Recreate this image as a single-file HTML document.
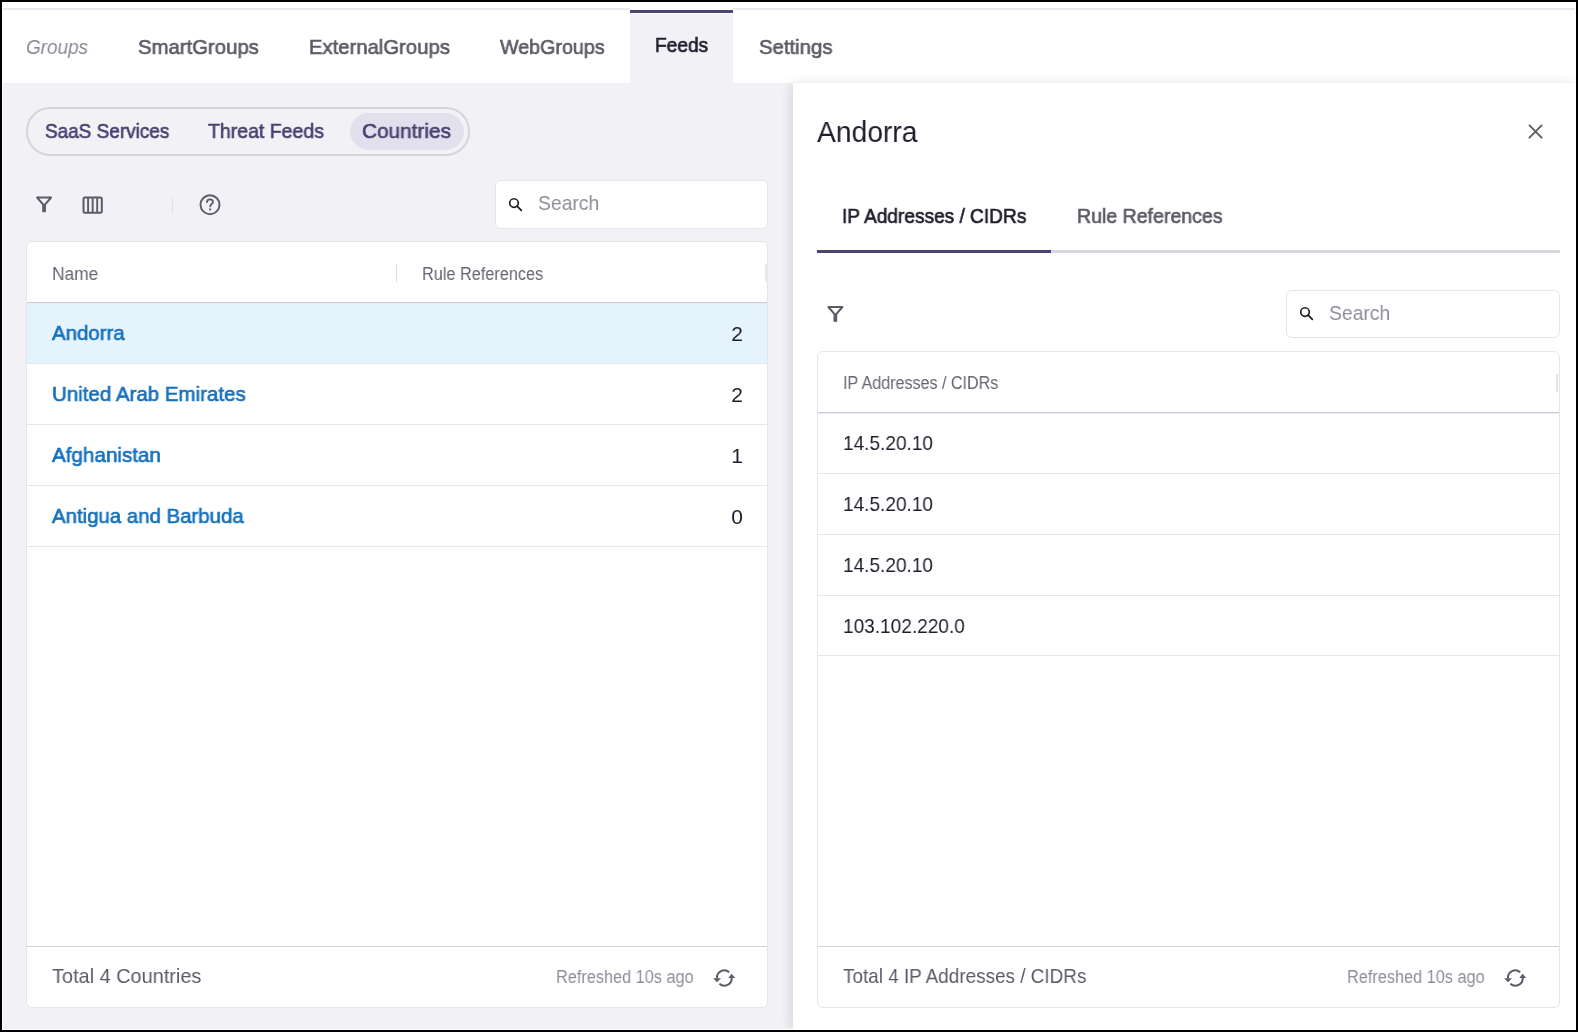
<!DOCTYPE html>
<html>
<head>
<meta charset="utf-8">
<style>
*{box-sizing:border-box;margin:0;padding:0}
html,body{width:1578px;height:1032px;overflow:hidden}
body{font-family:"Liberation Sans",sans-serif;position:relative;background:#f2f1f6}
.a{position:absolute}
.t{position:absolute;white-space:nowrap;line-height:21px;font-size:21px;will-change:transform;transform-origin:0 0}
.sb{-webkit-text-stroke:0.65px currentColor}
#frame{position:absolute;left:0;top:0;width:1578px;height:1032px;border:2px solid #000;z-index:50;pointer-events:none}
#wl{position:absolute;left:2px;top:2px;width:1px;height:1028px;background:#fff;z-index:49}
#wb{position:absolute;left:2px;top:1029px;width:1574px;height:1px;background:#fff;z-index:49}
#hdr{left:2px;top:2px;width:1574px;height:81px;background:#fff}
#hdrline{left:3px;top:8px;width:627px;height:2px;background:#e9e8ee}
#hdrline2{left:733px;top:8px;width:842px;height:2px;background:#e9e8ee}
#feedsTab{left:630px;top:10px;width:103px;height:73px;background:#f2f1f6;border-top:3px solid #4b4371}
#feedsTab:before{content:"";position:absolute;left:0;top:0;width:100%;height:1px;background:#fff}
.tab{color:#5c5b66}
.pill{left:26px;top:107px;width:444px;height:49px;border:2px solid #d6d4dd;border-radius:24px}
.pillsel{left:350px;top:113px;width:114px;height:37px;background:#e2e0ec;border-radius:19px}
.ptxt{color:#4a4270}
.ico{position:absolute}
.search{background:#fff;border:1.5px solid #e6e5eb;border-radius:6px}
.ph{color:#8f8d99}
.card{background:#fff;border:1.5px solid #e6e5ec;border-radius:6px}
.hd{font-size:18px;line-height:18px;color:#666571}
.lnk{color:#1570bd}
.num{color:#1f1d2b}
.ip{}
.rb{height:1px;background:#e6e5ec}
.hb{height:1px;background:#ccc9d8;box-shadow:0 1px 0 #ebeaf0}
.ft{color:#5c5b66}
.rf{font-size:18px;line-height:18px;color:#8f8d99}
#drawer{left:793px;top:83px;width:783px;height:947px;background:#fff;box-shadow:-3px 0 10px rgba(20,20,30,0.11)}
</style>
</head>
<body>
<div id="frame"></div>
<div id="wl"></div>
<div id="wb"></div>

<div class="a" id="hdr"></div>
<div class="a" id="hdrline"></div>
<div class="a" id="hdrline2"></div>
<div class="a" id="feedsTab"></div>
<div id="x1" class="t tab" style="left:26px;top:36px;font-style:italic;color:#8a8896;transform:scaleX(0.9015)">Groups</div>
<div id="x2" class="t tab sb" style="left:138px;top:36px;transform:scaleX(0.9680)">SmartGroups</div>
<div id="x3" class="t tab sb" style="left:309px;top:36px;transform:scaleX(0.9655)">ExternalGroups</div>
<div id="x4" class="t tab sb" style="left:500px;top:36px;transform:scaleX(0.9366)">WebGroups</div>
<div id="x5" class="t sb" style="left:655px;top:34px;color:#1f1d2b;transform:scaleX(0.9105)">Feeds</div>
<div id="x6" class="t tab sb" style="left:759px;top:36px;transform:scaleX(0.9671)">Settings</div>

<div class="a pill"></div>
<div class="a pillsel"></div>
<div id="x7" class="t ptxt sb" style="left:45px;top:120px;transform:scaleX(0.9022)">SaaS Services</div>
<div id="x8" class="t ptxt sb" style="left:208px;top:120px;transform:scaleX(0.9280)">Threat Feeds</div>
<div id="x9" class="t ptxt sb" style="left:362px;top:120px;transform:scaleX(0.9888)">Countries</div>

<!-- toolbar -->
<svg class="ico" style="left:34px;top:193px" width="20" height="22" viewBox="0.3 -0.5 20 22">
  <path d="M3.4 4 H17.4 L10.4 12.2 Z" fill="none" stroke="#5c5b66" stroke-width="2" stroke-linejoin="round"/>
  <rect x="8.5" y="11" width="3.7" height="7.8" rx="0.8" fill="#5c5b66"/>
</svg>
<svg class="ico" style="left:80px;top:194px" width="25" height="22" viewBox="0 0 25 22">
  <rect x="3.5" y="3.5" width="18.3" height="15.3" rx="1.5" fill="none" stroke="#5c5b66" stroke-width="2"/>
  <path d="M8.1 3.5v15.3M12.65 3.5v15.3M17.2 3.5v15.3" stroke="#5c5b66" stroke-width="1.9"/>
</svg>
<div class="a" style="left:172px;top:196px;width:1px;height:17px;background:#e2e1e7"></div>
<svg class="ico" style="left:198px;top:193px" width="24" height="24" viewBox="0 0 24 24">
  <circle cx="12" cy="11.7" r="9.5" fill="none" stroke="#5c5b66" stroke-width="1.9"/>
  <path d="M9 9.2 C9 7.2 10.4 6.3 12 6.3 C13.7 6.3 15 7.4 15 9 C15 10.8 12.2 11.3 12.2 13.4" fill="none" stroke="#5c5b66" stroke-width="1.8" stroke-linecap="round"/>
  <circle cx="12.2" cy="16.4" r="1.1" fill="#5c5b66"/>
</svg>

<div class="a search" style="left:495px;top:180px;width:273px;height:49px"></div>
<svg class="ico" style="left:507px;top:197px" width="17" height="16" viewBox="0 0 17 16">
  <circle cx="7" cy="6" r="4.3" fill="none" stroke="#1c1b22" stroke-width="1.65"/>
  <path d="M10.1 9.1 L14.3 13.3" stroke="#1c1b22" stroke-width="1.8" stroke-linecap="round"/>
</svg>
<div id="x10" class="t ph" style="left:538px;top:192px;transform:scaleX(0.9219)">Search</div>

<!-- left card -->
<div class="a card" style="left:26px;top:241px;width:742px;height:767px"></div>
<div id="x11" class="t hd" style="left:52px;top:265px;transform:scaleX(0.9630)">Name</div>
<div class="a" style="left:396px;top:264px;width:1px;height:18px;background:#dcdbe2"></div>
<div id="x12" class="t hd" style="left:422px;top:265px;transform:scaleX(0.9045)">Rule References</div>
<div class="a" style="left:765px;top:264px;width:2px;height:18px;background:#e9e8ee"></div>
<div class="a hb" style="left:27px;top:302px;width:740px"></div>
<div class="a" style="left:27px;top:304px;width:740px;height:59px;background:#e5f3fd"></div>
<div class="a rb" style="left:27px;top:363px;width:740px"></div>
<div class="a rb" style="left:27px;top:424px;width:740px"></div>
<div class="a rb" style="left:27px;top:485px;width:740px"></div>
<div class="a rb" style="left:27px;top:546px;width:740px"></div>
<div id="x13" class="t lnk sb" style="left:52px;top:322px;transform:scaleX(0.9733)">Andorra</div>
<div id="x14" class="t lnk sb" style="left:52px;top:383px;transform:scaleX(0.9761)">United Arab Emirates</div>
<div id="x15" class="t lnk sb" style="left:52px;top:444px;transform:scaleX(0.9818)">Afghanistan</div>
<div id="x16" class="t lnk sb" style="left:52px;top:505px;transform:scaleX(0.9712)">Antigua and Barbuda</div>
<div class="t num" style="left:701px;top:323px;width:42px;text-align:right">2</div>
<div class="t num" style="left:701px;top:384px;width:42px;text-align:right">2</div>
<div class="t num" style="left:701px;top:445px;width:42px;text-align:right">1</div>
<div class="t num" style="left:701px;top:506px;width:42px;text-align:right">0</div>
<div class="a rb" style="left:27px;top:946px;width:740px;height:1px;background:#d2d1d9"></div>
<div id="x17" class="t ft" style="left:52px;top:965px;transform:scaleX(0.9478)">Total 4 Countries</div>
<div id="x18" class="t rf" style="left:556px;top:968px;transform:scaleX(0.9053)">Refreshed 10s ago</div>
<svg class="ico" style="left:712px;top:967px" width="25" height="21" viewBox="0 0 25 21">
  <path d="M5 11.5 A7.3 7.3 0 0 1 17.2 5.3" fill="none" stroke="#5c5b66" stroke-width="2"/>
  <path d="M19.6 10.5 A7.3 7.3 0 0 1 7.4 16.7" fill="none" stroke="#5c5b66" stroke-width="2"/>
  <path d="M1.1 11.2 L9 11.2 L5 15.2 Z" fill="#5c5b66"/>
  <path d="M16.2 11 L23.2 11 L19.6 6.8 Z" fill="#5c5b66"/>
</svg>

<!-- drawer -->
<div class="a" id="drawer"></div>
<div id="x19" class="t" style="left:817px;top:117px;font-size:30px;line-height:30px;color:#1f1d2b;transform:scaleX(0.9411)">Andorra</div>
<svg class="ico" style="left:1526px;top:122px" width="19" height="19" viewBox="0 0 19 19">
  <path d="M3.45 3.45 L15.65 15.65 M15.65 3.45 L3.45 15.65" stroke="#5c5b66" stroke-width="1.9" stroke-linecap="round"/>
</svg>
<div id="x20" class="t sb" style="left:842px;top:205px;color:#1f1d2b;transform:scaleX(0.9094)">IP Addresses / CIDRs</div>
<div id="x21" class="t tab sb" style="left:1077px;top:205px;transform:scaleX(0.9303)">Rule References</div>
<div class="a" style="left:817px;top:250px;width:234px;height:3px;background:#4b4371"></div>
<div class="a" style="left:1051px;top:250px;width:509px;height:3px;background:#d8d7e0"></div>

<svg class="ico" style="left:825px;top:303px" width="20" height="22" viewBox="0 0 20 22">
  <path d="M3.4 4 H17.4 L10.4 12.2 Z" fill="none" stroke="#5c5b66" stroke-width="2" stroke-linejoin="round"/>
  <rect x="8.5" y="11" width="3.7" height="7.8" fill="#5c5b66"/>
</svg>
<div class="a search" style="left:1286px;top:290px;width:274px;height:48px"></div>
<svg class="ico" style="left:1298px;top:306px" width="17" height="16" viewBox="0 0 17 16">
  <circle cx="7" cy="6" r="4.3" fill="none" stroke="#1c1b22" stroke-width="1.65"/>
  <path d="M10.1 9.1 L14.3 13.3" stroke="#1c1b22" stroke-width="1.8" stroke-linecap="round"/>
</svg>
<div id="x22" class="t ph" style="left:1329px;top:302px;transform:scaleX(0.9219)">Search</div>

<div class="a card" style="left:817px;top:351px;width:743px;height:657px"></div>
<div id="x23" class="t hd" style="left:843px;top:374px;transform:scaleX(0.8936)">IP Addresses / CIDRs</div>
<div class="a" style="left:1556px;top:374px;width:2px;height:18px;background:#e6e5ec"></div>
<div class="a hb" style="left:818px;top:412px;width:741px"></div>
<div class="a rb" style="left:818px;top:473px;width:741px"></div>
<div class="a rb" style="left:818px;top:534px;width:741px"></div>
<div class="a rb" style="left:818px;top:595px;width:741px"></div>
<div class="a rb" style="left:818px;top:655px;width:741px"></div>
<div id="x24" class="t num ip" style="left:843px;top:432px;transform:scaleX(0.9061)">14.5.20.10</div>
<div id="x25" class="t num ip" style="left:843px;top:493px;transform:scaleX(0.9061)">14.5.20.10</div>
<div id="x26" class="t num ip" style="left:843px;top:554px;transform:scaleX(0.9061)">14.5.20.10</div>
<div id="x27" class="t num ip" style="left:843px;top:615px;transform:scaleX(0.9075)">103.102.220.0</div>
<div class="a rb" style="left:818px;top:946px;width:741px;height:1px;background:#d2d1d9"></div>
<div id="x28" class="t ft" style="left:843px;top:965px;transform:scaleX(0.9000)">Total 4 IP Addresses / CIDRs</div>
<div id="x29" class="t rf" style="left:1347px;top:968px;transform:scaleX(0.9053)">Refreshed 10s ago</div>
<svg class="ico" style="left:1503px;top:967px" width="25" height="21" viewBox="0 0 25 21">
  <path d="M5 11.5 A7.3 7.3 0 0 1 17.2 5.3" fill="none" stroke="#5c5b66" stroke-width="2"/>
  <path d="M19.6 10.5 A7.3 7.3 0 0 1 7.4 16.7" fill="none" stroke="#5c5b66" stroke-width="2"/>
  <path d="M1.1 11.2 L9 11.2 L5 15.2 Z" fill="#5c5b66"/>
  <path d="M16.2 11 L23.2 11 L19.6 6.8 Z" fill="#5c5b66"/>
</svg>
</body>
</html>
